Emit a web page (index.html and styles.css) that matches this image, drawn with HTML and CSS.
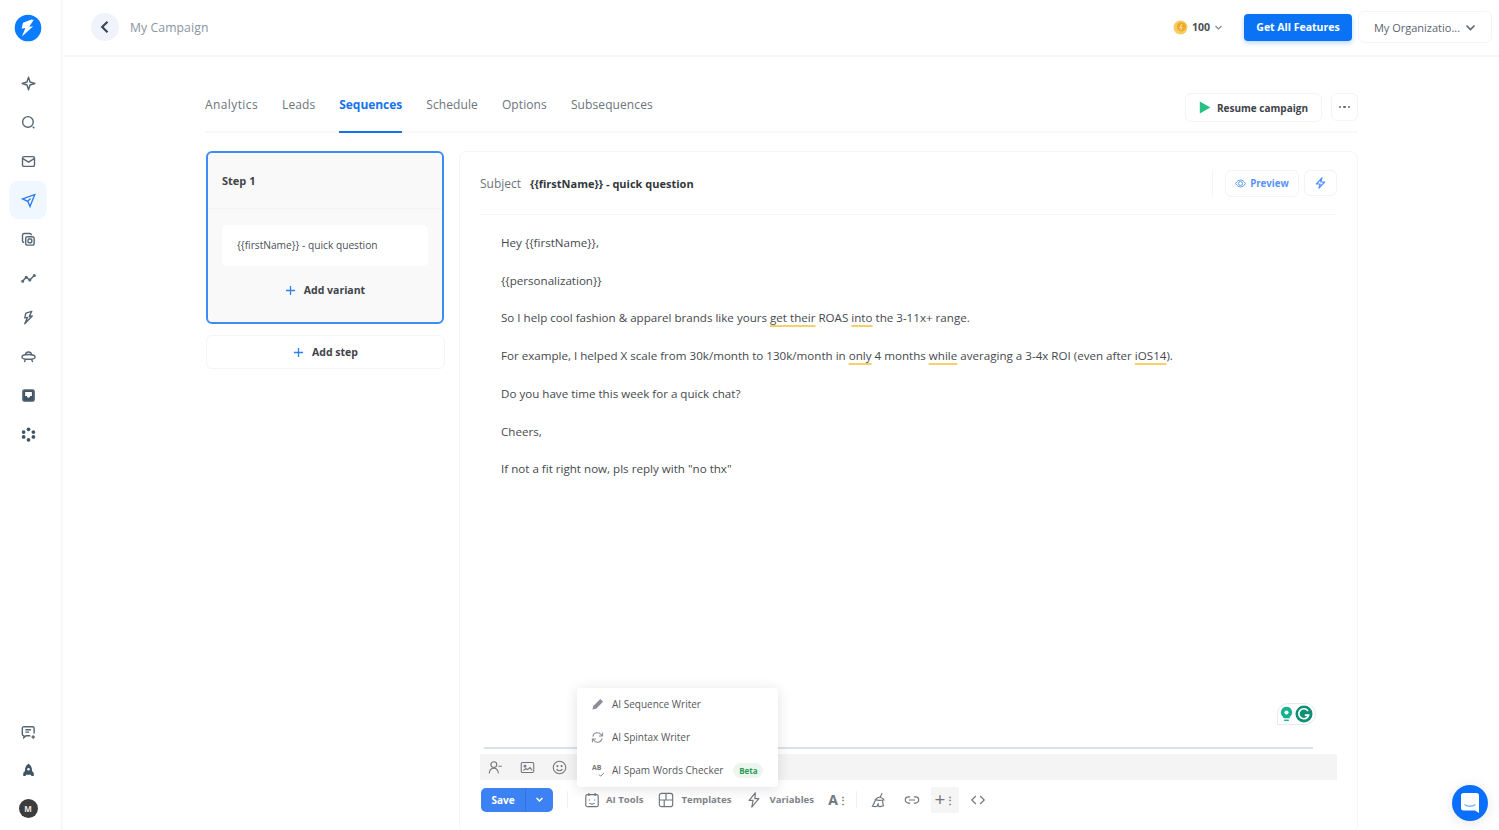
FILE: index.html
```html
<!DOCTYPE html>
<html lang="en">
<head>
<meta charset="utf-8">
<title>My Campaign</title>
<link rel="stylesheet" href="styles.css">
</head>
<body>
<div class="app">
  <aside class="rail">
    <svg class="logo" width="28" height="28" viewBox="0 0 28 28"><circle cx="14" cy="14" r="13.3" fill="#0a7cff"/><path d="M17.5 5.5 9 8.7l-1.4 6.1 3.7-.7-3.3 8.4 11.2-10.3-4 .5 4.4-6.6z" fill="#fff"/></svg>
    <nav class="rail-top">
      <a class="rail-item"><svg class="ico" viewBox="0 0 16 16"><path d="M8 1.2 9.6 6.4 14.8 8 9.6 9.6 8 14.8 6.4 9.6 1.2 8 6.4 6.4z" stroke-linejoin="round"/></svg></a>
      <a class="rail-item"><svg class="ico" viewBox="0 0 16 16"><circle cx="7.4" cy="7.4" r="5.7"/><path d="M12.6 12.6l1.6 1.6"/></svg></a>
      <a class="rail-item"><svg class="ico" viewBox="0 0 16 16"><rect x="1.6" y="2.8" width="12.8" height="10.4" rx="1.6"/><path d="M2 5l6 3.6L14 5"/></svg></a>
      <a class="rail-item active"><svg class="ico blue" viewBox="0 0 16 16"><path d="M14.6 1.8 1.6 6.3l5.6 2.5 2.4 5.6zM7.2 8.8l3-3"/></svg></a>
      <a class="rail-item"><svg class="ico" viewBox="0 0 16 16"><rect x="5" y="5" width="9" height="9" rx="2"/><rect x="7.500" y="7.500" width="4" height="4" rx="1"/><path d="M11 3.4V3a1.4 1.4 0 0 0-1.4-1.4H3.4A1.8 1.8 0 0 0 1.6 3.4v6.2A1.4 1.4 0 0 0 3 11h.4"/></svg></a>
      <a class="rail-item"><svg class="ico" viewBox="0 0 16 16"><path d="M1.6 11 5.6 6.600 9.400 9.600 14.400 4.600"/><circle cx="1.800" cy="11" r=".9"/><circle cx="5.600" cy="6.600" r=".9"/><circle cx="9.400" cy="9.600" r=".9"/><circle cx="14.200" cy="4.800" r=".9"/></svg></a>
      <a class="rail-item"><svg class="ico" viewBox="0 0 16 16"><path d="M11.500 1.400 5.200 3.400 4 8.400l3-.5-3 6.700 8-8.200-3.200.5z" stroke-linejoin="round"/></svg></a>
      <a class="rail-item"><svg class="ico" viewBox="0 0 16 16"><path d="M4.800 6.400a3.200 3.200 0 0 1 6.400 0"/><ellipse cx="8" cy="8.400" rx="7" ry="2.600"/><path d="M4.600 11.200l-1 2.800M11.400 11.200l1 2.800"/></svg></a>
      <a class="rail-item"><svg class="ico" viewBox="0 0 16 16"><rect x="2" y="2" width="12" height="12" rx="1.400" fill="#3f5566"/><path d="M4.400 4.200h7.200v4.400H9.800a1.800 1.800 0 0 1-3.600 0H4.400z" fill="#fff" stroke="none"/></svg></a>
      <a class="rail-item"><svg class="ico fill" viewBox="0 0 16 16"><circle cx="8" cy="2.400" r="2"/><circle cx="13.200" cy="5.400" r="2"/><circle cx="13.200" cy="10.600" r="2"/><circle cx="8" cy="13.600" r="2"/><circle cx="2.800" cy="10.600" r="2"/><circle cx="2.800" cy="5.400" r="2"/></svg></a>
    </nav>
    <div class="rail-bottom">
      <a class="rail-item"><svg class="ico" viewBox="0 0 16 16"><path d="M14 9V3.400a1.600 1.600 0 0 0-1.600-1.600H3A1.600 1.600 0 0 0 1.400 3.400v6.400A1.600 1.600 0 0 0 3 11.400v2.200l2.400-2.200H10M4.600 5h6M4.600 7.600h4"/><path d="M13 11v3.600M11.200 12.800h3.600"/></svg></a>
      <a class="rail-item"><svg class="ico fill" viewBox="0 0 16 16"><path d="M8 .8c2.800 1.600 3.800 4.600 3.800 7.600l1.800 2.400v3h-2.400l-.8-1.400H5.600l-.8 1.400H2.400v-3l1.800-2.400c0-3 1-6 3.800-7.600z"/><circle cx="8" cy="6.600" r="1.300" fill="#fff"/></svg></a>
      <span class="avatar">M</span>
    </div>
  </aside>

  <div class="main">
    <header class="topbar">
      <button class="back"><svg width="14" height="14" viewBox="0 0 14 14"><path d="M9.500 1.800 4.200 7l5.300 5.200" fill="none" stroke="#3a4656" stroke-width="2.200"/></svg></button>
      <span class="crumb">My Campaign</span>
      <div class="top-right">
        <span class="credits">
          <svg width="15" height="15" viewBox="0 0 15 15"><circle cx="7.500" cy="7.500" r="7" fill="#f5cd64"/><circle cx="8.400" cy="6.800" r="4.600" fill="#f0a92c"/><path d="M9 4 7 7.500h2L7.500 10" stroke="#fbe6a6" fill="none"/></svg>
          <span class="credit-num">100</span>
          <svg class="chev-sm" width="9" height="9" viewBox="0 0 9 9"><path d="M1.500 3 4.500 6l3-3" fill="none" stroke="#7d8792" stroke-width="1.200"/></svg>
        </span>
        <button class="cta">Get All Features</button>
        <button class="org">My Organizatio...<svg width="11" height="11" viewBox="0 0 11 11"><path d="M1.500 3.500 5.500 7.500l4-4" fill="none" stroke="#5c6570" stroke-width="1.600"/></svg></button>
      </div>
    </header>

    <div class="content">
      <div class="tabbar">
        <a class="tab">Analytics</a>
        <a class="tab">Leads</a>
        <a class="tab current">Sequences</a>
        <a class="tab">Schedule</a>
        <a class="tab">Options</a>
        <a class="tab">Subsequences</a>
        <div class="tab-actions">
          <button class="resume"><svg width="12" height="13" viewBox="0 0 12 13"><path d="M.8.600 11.400 6.500.8 12.400z" fill="#27c283"/></svg>Resume campaign</button>
          <button class="more"><i></i><i></i><i></i></button>
        </div>
      </div>

      <div class="columns">
        <div class="steps">
          <section class="step">
            <div class="step-head">Step 1</div>
            <div class="step-body">
              <div class="variant">{{firstName}} - quick question</div>
              <button class="add add-variant"><svg class="plus" viewBox="0 0 12 12"><path d="M6 1v10M1 6h10"/></svg>Add variant</button>
            </div>
          </section>
          <button class="add add-step"><svg class="plus" viewBox="0 0 12 12"><path d="M6 1v10M1 6h10"/></svg>Add step</button>
        </div>

        <section class="editor">
          <div class="subject">
            <span class="subject-label">Subject</span>
            <span class="subject-value">{{firstName}} - quick question</span>
            <div class="subject-actions">
              <button class="preview"><svg width="11" height="11" viewBox="0 0 12 12" fill="none" stroke="#5a93f5"><path d="M.7 6C2 3.500 3.800 2.300 6 2.300S10 3.500 11.300 6C10 8.500 8.200 9.700 6 9.700S2 8.500.7 6z"/><circle cx="6" cy="6" r="2.200"/></svg>Preview</button>
              <button class="spark"><svg width="11" height="12" viewBox="0 0 11 12" fill="none" stroke="#4c8cf5" stroke-width="1.200"><path d="M7 .8 1.400 7h3.800L4 11.200 9.600 5H5.800z" stroke-linejoin="round"/></svg></button>
            </div>
          </div>

          <div class="body-text">
            <p>Hey {{firstName}},</p>
            <p>{{personalization}}</p>
            <p>So I help cool fashion &amp; apparel brands like yours <u>get their</u> ROAS <u>into</u> the 3-11x+ range.</p>
            <p>For example, I helped X scale from 30k/month to 130k/month in <u>only</u> 4 months <u>while</u> averaging a 3-4x ROI (even after <u>iOS14</u>).</p>
            <p>Do you have time this week for a quick chat?</p>
            <p>Cheers,</p>
            <p>If not a fit right now, pls reply with "no thx"</p>
          </div>

          <div class="composer">
            <div class="grammarly">
              <svg width="13" height="16" viewBox="0 0 14 17"><path d="M7 .8a6 6 0 0 0-3.500 10.900V13h7v-1.300A6 6 0 0 0 7 .8z" fill="#15b190"/><path d="M4.500 14.500h5v1.600h-5z" fill="#15b190"/><circle cx="7" cy="6.800" r="2.200" fill="#fff"/></svg>
              <svg width="18" height="18" viewBox="0 0 18 18"><circle cx="9" cy="9" r="8.500" fill="#0f8f73"/><path d="M13 6a5 5 0 1 0 .6 4.200H9.800" fill="none" stroke="#fff" stroke-width="1.700"/></svg>
            </div>
            <div class="rule"></div>
            <div class="format-row">
              <svg class="tool" viewBox="0 0 18 18"><circle cx="7" cy="5.500" r="3.500"/><path d="M1.500 16c.4-3.600 2.600-6 5.500-6s5 2.400 5.500 6M12.500 7.500h4"/></svg>
              <svg class="tool" viewBox="0 0 18 18"><rect x="1.500" y="3" width="15" height="12" rx="1.500"/><circle cx="6" cy="7.500" r="1.100"/><path d="M4 12.500l3-2 2 1 3-2.500 2.500 3.500"/></svg>
              <svg class="tool" viewBox="0 0 18 18"><circle cx="9" cy="9" r="7.500"/><circle cx="6.500" cy="7.300" r=".6"/><circle cx="11.500" cy="7.300" r=".6"/><path d="M5.500 11c1 1.500 2.200 2 3.500 2s2.500-.5 3.500-2"/></svg>
            </div>
            <div class="action-row">
              <div class="save-group">
                <button class="save">Save</button>
                <button class="save-caret"><svg width="9" height="9" viewBox="0 0 9 9"><path d="M1.500 3 4.500 6l3-3" fill="none" stroke="#fff" stroke-width="1.500"/></svg></button>
              </div>
              <span class="vsep"></span>
              <button class="tool-btn tb-ai"><svg class="tool big" viewBox="0 0 18 18"><rect x="2" y="3" width="14" height="13.500" rx="2"/><path d="M5.500 1v3.500M12.500 1v3.500M6 8.500v1M12 8.500v1M6 12.500c1.800 1.300 4.200 1.300 6 0"/></svg>AI Tools</button>
              <button class="tool-btn tb-tpl"><svg class="tool big" viewBox="0 0 18 18"><rect x="1.500" y="1.500" width="15" height="15" rx="2.500"/><path d="M1.500 9h15M9 1.500V9M7 9v7.500"/></svg>Templates</button>
              <button class="tool-btn tb-var"><svg class="tool big" viewBox="0 0 18 18"><path d="M10.500 1 3.500 9.500H8L6.500 17l8-9.500H10z" stroke-linejoin="round"/></svg>Variables</button>
              <button class="icon-btn btn-a"><span class="aa">A<b>⋮</b></span></button>
              <span class="vsep tight"></span>
              <button class="icon-btn"><svg class="tool big" viewBox="0 0 18 18"><path d="M12.500 1.500 10 6.500M6.500 7c2-1.500 5-1 7 .5l1 1.500c-3 .5-8 .5-9.500-.5zM5 9c-1 3-2 5-3.500 7 2 .5 4 .5 5.500 0 0-1 .5-2 1-2.500 0 1 .5 2 1 3 2 0 4-.5 5-1-.5-2-1-4-1-6"/></svg></button>
              <button class="icon-btn"><svg class="tool big" viewBox="0 0 18 18"><path d="M7 5.500H5a3.500 3.500 0 0 0 0 7h2M11 5.500h2a3.500 3.500 0 0 1 0 7h-2M5.500 9h7"/></svg></button>
              <button class="icon-btn hl"><span class="plus-more">+<b>⋮</b></span></button>
              <button class="icon-btn"><svg class="tool big" viewBox="0 0 18 18"><path d="M6.500 4.500 2 9l4.500 4.500M11.500 4.500 16 9l-4.500 4.500"/></svg></button>
            </div>

            <div class="menu">
              <div class="menu-item"><svg class="menu-ico" viewBox="0 0 14 14"><path d="M10 1l3 3-7.500 7.500L1.500 12.500 2.500 8.500z" fill="#8b9097" stroke="none"/></svg>AI Sequence Writer</div>
              <div class="menu-item"><svg class="menu-ico" viewBox="0 0 14 14"><path d="M2 6a5 5 0 0 1 9-2l1.500 1.500M12 8a5 5 0 0 1-9 2L1.500 8.500M12.500 1.500v4h-4M1.500 12.500v-4h4"/></svg>AI Spintax Writer</div>
              <div class="menu-item"><span class="ab">AB</span><svg class="check" viewBox="0 0 8 6"><path d="M1 3l2 2 4-4"/></svg>AI Spam Words Checker<span class="beta">Beta</span></div>
            </div>
          </div>
        </section>
      </div>
    </div>
  </div>
</div>
<button class="chat"><svg width="18" height="20" viewBox="0 0 18 20"><path d="M2.500 0h13A2.500 2.500 0 0 1 18 2.500V20l-4-2.500H2.500A2.500 2.500 0 0 1 0 15V2.500A2.500 2.500 0 0 1 2.500 0z" fill="#fff"/><path d="M3.500 11.500c3 2.300 8 2.300 11 0" fill="none" stroke="#7fb2ff" stroke-width="1.400"/></svg></button>
</body>
</html>
```

FILE: styles.css
```css
* { box-sizing: border-box; }
html, body { margin: 0; height: 100%; overflow: hidden; }
body { font-family: "Open Sans", "Lato", sans-serif; color: #3c4043; background: #fff; font-variant-ligatures: none; }
button { font: inherit; background: none; border: 0; padding: 0; color: inherit; }
p { margin: 0; }

.app { display: flex; height: 830px; }

.rail { width: 63px; flex: none; border-right: 2px solid #f7f8f9; display: flex; flex-direction: column; align-items: center; padding: 14px 5px 1px 0; }
.logo { flex: none; margin-bottom: 22px; }
.rail-top { display: flex; flex-direction: column; gap: 1px; }
.rail-bottom { margin-top: auto; display: flex; flex-direction: column; align-items: center; }
.rail-item { width: 38px; height: 38px; display: flex; align-items: center; justify-content: center; border-radius: 9px; }
.rail-item.active { background: #f1f7ff; }
.ico { width: 15px; height: 15px; fill: none; stroke: #566674; stroke-width: 1.500; }
.ico.blue { stroke: #2f7cf6; }
.ico.fill { fill: #3f5566; stroke: none; }
.avatar { width: 19px; height: 19px; margin: 10px 0 11px; border-radius: 50%; background: #3c3c3c; color: #e8e8e8; font-size: 8px; font-weight: 700; display: flex; align-items: center; justify-content: center; }

.main { flex: 1; min-width: 0; display: flex; flex-direction: column; }

.topbar { height: 57px; flex: none; border-bottom: 2px solid #f7f8f9; display: flex; align-items: center; padding: 0 7px 1px 28px; }
.back { width: 28px; height: 28px; border-radius: 50%; background: #f0f3fb; display: flex; align-items: center; justify-content: center; }
.crumb { margin-left: 11px; font-size: 12.200px; color: #8b95a1; letter-spacing: .1px; padding-top: 1px; }
.top-right { margin-left: auto; display: flex; align-items: center; }
.credits { display: flex; align-items: center; gap: 4px; margin-right: 21px; }
.credit-num { font-size: 10.500px; font-weight: 700; color: #4a4f55; }
.chev-sm { margin-left: 0; }
.cta { width: 108px; height: 27px; border-radius: 4px; background: #0a73f5; color: #fff; font-size: 10.500px; font-weight: 700; box-shadow: 0 2px 5px rgba(10,115,245,.3); }
.org { margin-left: 6px; width: 134px; height: 32px; border: 1px solid #f3f4f6; border-radius: 6px; display: flex; align-items: center; justify-content: center; gap: 5px; font-size: 11px; color: #5c6570; }

.content { flex: 1; min-height: 0; margin-left: 142px; width: 1153px; display: flex; flex-direction: column; }

.tabbar { height: 76px; flex: none; border-bottom: 2px solid #f7f8f9; display: flex; align-items: flex-start; gap: 24px; padding-top: 35px; }
.tab { height: 41px; font-size: 12px; color: #6c747d; letter-spacing: .1px; padding-top: 4px; }
.tab:first-child { letter-spacing: .4px; }
.tab.current { color: #1473ef; font-weight: 700; letter-spacing: -.05px; border-bottom: 2px solid #1473ef; }
.tab-actions { margin-left: auto; display: flex; gap: 9px; margin-top: 1px; }
.resume { width: 137px; height: 29px; border: 1px solid #f3f4f6; border-radius: 6px; display: flex; align-items: center; justify-content: center; gap: 6px; font-size: 10px; font-weight: 700; color: #3e4349; }
.more { width: 27px; height: 28px; border: 1px solid #f3f4f6; border-radius: 6px; display: flex; align-items: center; justify-content: center; gap: 2px; }
.more i { width: 2.500px; height: 2.500px; border-radius: 50%; background: #666; }

.columns { flex: 1; min-height: 0; display: flex; gap: 14px; padding-top: 18px; }

.steps { width: 240px; flex: none; display: flex; flex-direction: column; gap: 11px; padding-left: 1px; }
.step { width: 238px; height: 173px; border: 2px solid #3d8cf6; border-radius: 6px; background: #f9f9f9; }
.step-head { height: 56px; display: flex; align-items: center; padding: 0 14px; font-size: 11px; font-weight: 700; color: #3e4349; border-bottom: 1px solid #f3f3f3; }
.step-body { padding: 16px 14px 0; }
.variant { height: 41px; border-radius: 5px; background: #fff; display: flex; align-items: center; padding: 0 0 1px 15px; font-size: 10.200px; color: #4a4f55; }
.add { display: flex; align-items: center; justify-content: center; gap: 8px; font-size: 10.500px; font-weight: 700; color: #3e4349; }
.plus { width: 11px; height: 11px; fill: none; stroke: #2f80ed; stroke-width: 1.400; }
.add-variant { width: 100%; height: 48px; }
.add-step { height: 34px; border: 1px solid #f5f5f6; border-radius: 6px; }

.editor { flex: 1; min-width: 0; border: 1px solid #f4f5f6; border-radius: 8px 8px 6px 6px; padding: 0 20px; display: flex; flex-direction: column; margin-bottom: -2px; }
.subject { height: 63px; flex: none; border-bottom: 1px solid #f4f5f6; display: flex; align-items: center; gap: 9px; }
.subject-label { font-size: 12px; color: #6c747d; }
.subject-value { font-size: 11px; font-weight: 700; color: #33373b; }
.subject-actions { margin-left: auto; display: flex; align-items: center; gap: 5px; padding-left: 12px; border-left: 1px solid #f4f5f6; height: 27px; }
.preview { width: 74px; height: 27px; border: 1px solid #f3f4f6; border-radius: 6px; display: flex; align-items: center; justify-content: center; gap: 4px; font-size: 9.700px; font-weight: 700; color: #5a93f5; }
.spark { width: 33px; height: 26px; border: 1px solid #f3f4f6; border-radius: 6px; display: flex; align-items: center; justify-content: center; }

.body-text { padding: 19px 0 0 21px; flex: none; display: flex; flex-direction: column; gap: 20px; font-size: 11.600px; line-height: 17.700px; color: #45494e; }
.body-text u { text-decoration: underline #f7cf6d 2px; text-underline-offset: 3px; }

.composer { margin-top: auto; position: relative; flex: none; }
.grammarly { position: absolute; right: 21px; top: -44px; width: 39px; height: 22px; border: 1px solid #e6e9ee; border-radius: 11px 11px 11px 0; display: flex; align-items: center; justify-content: center; gap: 2px; }
.rule { height: 2.500px; background: #dbe2e8; margin: 0 24px 0 4px; }
.format-row { height: 26px; margin-top: 5px; background: #f4f4f4; display: flex; align-items: center; gap: 17px; padding-left: 8px; }
.tool { width: 15px; height: 15px; fill: none; stroke: #70767d; stroke-width: 1.300; flex: none; }
.tool.big { width: 16px; height: 16px; }
.action-row { height: 33px; margin-top: 3px; margin-bottom: 15px; display: flex; align-items: center; padding-left: 1px; }
.save-group { display: flex; width: 72px; height: 24px; border-radius: 5px; overflow: hidden; background: #3d82f5; color: #fff; }
.save { width: 45px; font-size: 10px; font-weight: 700; color: #fff; border-right: 1px solid #2f72e0; }
.save-caret { flex: 1; display: flex; align-items: center; justify-content: center; }
.vsep { width: 1px; height: 17px; background: #f0f1f2; margin: 0 16px 0 14px; flex: none; }
.vsep.tight { margin: 0 8px 0 10px; }
.tool-btn { display: flex; align-items: center; gap: 7px; font-size: 9.600px; font-weight: 700; color: #7d8389; }
.tb-ai { gap: 6px; margin-right: 15px; }
.tb-tpl { margin-right: 15px; }
.tb-var { margin-right: 16px; }
.icon-btn { width: 28px; height: 26px; display: flex; align-items: center; justify-content: center; margin-right: 5px; border-radius: 2px; }
.icon-btn.btn-a { width: 16px; margin-right: 0; }
.icon-btn.hl { background: #f5f5f5; }
.aa, .plus-more { font-size: 14px; font-weight: 700; color: #70767d; display: flex; align-items: center; line-height: 1; }
.plus-more { font-size: 19px; font-weight: 400; }
.aa b, .plus-more b { font-size: 10px; font-weight: 700; }

.menu { position: absolute; left: 97px; top: -59px; width: 201px; height: 99px; background: #fff; border-radius: 3px; box-shadow: 0 2px 14px rgba(0,0,0,.12); display: flex; flex-direction: column; justify-content: center; }
.menu-item { height: 33px; display: flex; align-items: center; position: relative; padding-left: 35px; font-size: 10px; color: #54585d; }
.menu-ico { position: absolute; left: 14px; width: 13px; height: 13px; fill: none; stroke: #8b9097; stroke-width: 1.100; }
.ab { position: absolute; left: 15px; top: 9px; font-size: 7px; font-weight: 700; color: #777; }
.check { position: absolute; left: 21px; top: 18px; width: 7px; height: 5px; fill: none; stroke: #777; stroke-width: 1.100; }
.beta { margin-left: 10px; width: 30px; height: 15px; border-radius: 8px; background: #ecf6ef; color: #2c9a55; font-size: 8px; font-weight: 700; display: flex; align-items: center; justify-content: center; }

.chat { position: fixed; right: 11px; bottom: 9px; width: 36px; height: 36px; border-radius: 50%; background: #0a6ffc; display: flex; align-items: center; justify-content: center; box-shadow: 0 2px 14px rgba(0,0,0,.1); }
```
